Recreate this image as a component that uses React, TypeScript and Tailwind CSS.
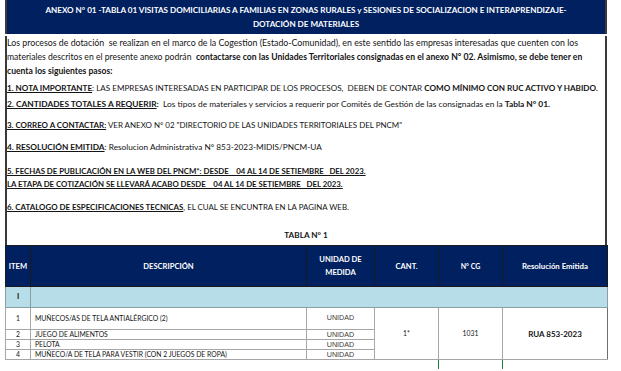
const items = [
  "JUEGO DE ALIMENTOS",
  "PELOTA",
  "MUÑECO/A DE TELA PARA VESTIR (CON 2 JUEGOS DE ROPA)",
];

export default function App() {
  const line = "h-[14px] leading-[14px] whitespace-pre";
  const cell = "border border-[#a6a6a6]";
  const head = "border border-[#1a1a1a] font-bold";
  const unidad = "border border-[#a6a6a6] text-center font-['Liberation_Sans',sans-serif] text-[7.2px] text-[#3c3c3c]";
  return (
    <div className="w-[621px] h-[371px] bg-white overflow-hidden font-['Lato',sans-serif] text-[#141414]">
      <div className="ml-[5px] w-[602px]">
        {/* Title bar */}
        <div className="h-[34px] bg-[#002060] border-x-2 border-[#3a3a3a] pt-[3px] text-center text-white font-bold text-[8.1px] leading-[14px]">
          <div>ANEXO N° 01 -TABLA 01 VISITAS DOMICILIARIAS A FAMILIAS EN ZONAS RURALES y SESIONES DE SOCIALIZACION E INTERAPRENDIZAJE-</div>
          <div>DOTACIÓN DE MATERIALES</div>
        </div>

        {/* Instructions */}
        <div className="border-x-2 border-[#3a3a3a] pb-[3px]">
          <div className={`${line} mt-[2px] text-[8.8px]`}>
            Los procesos de dotación  se realizan en el marco de la Cogestion (Estado-Comunidad), en este sentido las empresas interesadas que cuenten con los
          </div>
          <div className={`${line} text-[8.65px]`}>
            materiales descritos en el presente anexo podrán  <b>contactarse con las Unidades Territoriales consignadas en el anexo N° 02. Asimismo, se debe tener en</b>
          </div>
          <div className={`${line} text-[8.6px] font-bold`}>cuenta los siguientes pasos:</div>

          <div className={`${line} mt-[3px] text-[8.1px]`}>
            <b className="underline">1. NOTA IMPORTANTE</b>: LAS EMPRESAS INTERESADAS EN PARTICIPAR DE LOS PROCESOS,  DEBEN DE CONTAR <b>COMO MÍNIMO CON RUC ACTIVO Y HABIDO.</b>
          </div>
          <div className={`${line} mt-[2px] text-[8.4px]`}>
            <b className="underline">2. CANTIDADES TOTALES A REQUERIR</b><b>:</b>  Los tipos de materiales y servicios a requerir por Comités de Gestión de las consignadas en la <b>Tabla N° 01.</b>
          </div>
          <div className={`${line} mt-[7px] text-[7.95px]`}>
            <b className="underline">3. CORREO A CONTACTAR:</b> VER ANEXO N° 02 "DIRECTORIO DE LAS UNIDADES TERRITORIALES DEL PNCM"
          </div>
          <div className={`${line} mt-[8px] text-[8.27px]`}>
            <b className="underline">4. RESOLUCIÓN EMITIDA</b>: Resolucion Administrativa N° 853-2023-MIDIS/PNCM-UA
          </div>
          <div className="mt-[11px] leading-[13px] text-[7.82px] font-bold whitespace-pre">
            <div><span className="underline">5. FECHAS DE PUBLICACIÓN EN LA WEB DEL PNCM*: DESDE    04 AL 14 DE SETIEMBRE   DEL 2023.</span></div>
            <div><span className="underline">LA ETAPA DE COTIZACIÓN SE LLEVARÁ ACABO DESDE    04 AL 14 DE SETIEMBRE   DEL 2023.</span></div>
          </div>
          <div className={`${line} mt-[9px] text-[7.9px]`}>
            <b className="underline">6. CATALOGO DE ESPECIFICACIONES TECNICAS</b>, EL CUAL SE ENCUNTRA EN LA PAGINA WEB.
          </div>
          <div className={`${line} mt-[14px] text-center font-bold text-[8.2px]`}>TABLA N° 1</div>
        </div>

        {/* Table */}
        <table className="w-[602px] border-collapse table-fixed text-[6.8px]">
          <colgroup>
            <col className="w-[25px]" />
            <col className="w-[276px]" />
            <col className="w-[68px]" />
            <col className="w-[64px]" />
            <col className="w-[64px]" />
            <col className="w-[105px]" />
          </colgroup>
          <thead>
            <tr className="h-[41px] bg-[#002060] text-white text-[7.6px] leading-[13px]">
              <th className={head}>ITEM</th>
              <th className={head}>DESCRIPCIÓN</th>
              <th className={head}>UNIDAD DE<br />MEDIDA</th>
              <th className={head}>CANT.</th>
              <th className={`${head} text-[7px]`}>N° CG</th>
              <th className={`${head} text-[7.8px]`}>Resolución Emitida</th>
            </tr>
          </thead>
          <tbody>
            <tr className="h-[21px] bg-[#b7dee8] font-bold">
              <td className="border border-[#8a9ea4] text-center text-[7.5px]">I</td>
              <td className="border border-[#8a9ea4]" colSpan={5}></td>
            </tr>
            <tr className="h-[22px]">
              <td className={`${cell} text-center`}>1</td>
              <td className={`${cell} pl-[4px]`}>MUÑECOS/AS DE TELA ANTIALÉRGICO (2)</td>
              <td className={unidad}>UNIDAD</td>
              <td className={`${cell} text-center`} rowSpan={4}>1*</td>
              <td className={`${cell} text-center`} rowSpan={4}>1031</td>
              <td className={`${cell} border-r-[#6e6e6e] text-center font-bold text-[8px]`} rowSpan={4}>RUA 853-2023</td>
            </tr>
            {items.map((d, i) => (
              <tr key={d} className="h-[10px] leading-[9px]">
                <td className={`${cell} text-center`}>{i + 2}</td>
                <td className={`${cell} pl-[4px]`}>{d}</td>
                <td className={unidad}>UNIDAD</td>
              </tr>
            ))}
            <tr className="h-[9px]">
              <td colSpan={4}></td>
              <td className="border-t border-x border-[#1e7b45]"></td>
              <td></td>
            </tr>
          </tbody>
        </table>
      </div>
    </div>
  );
}
